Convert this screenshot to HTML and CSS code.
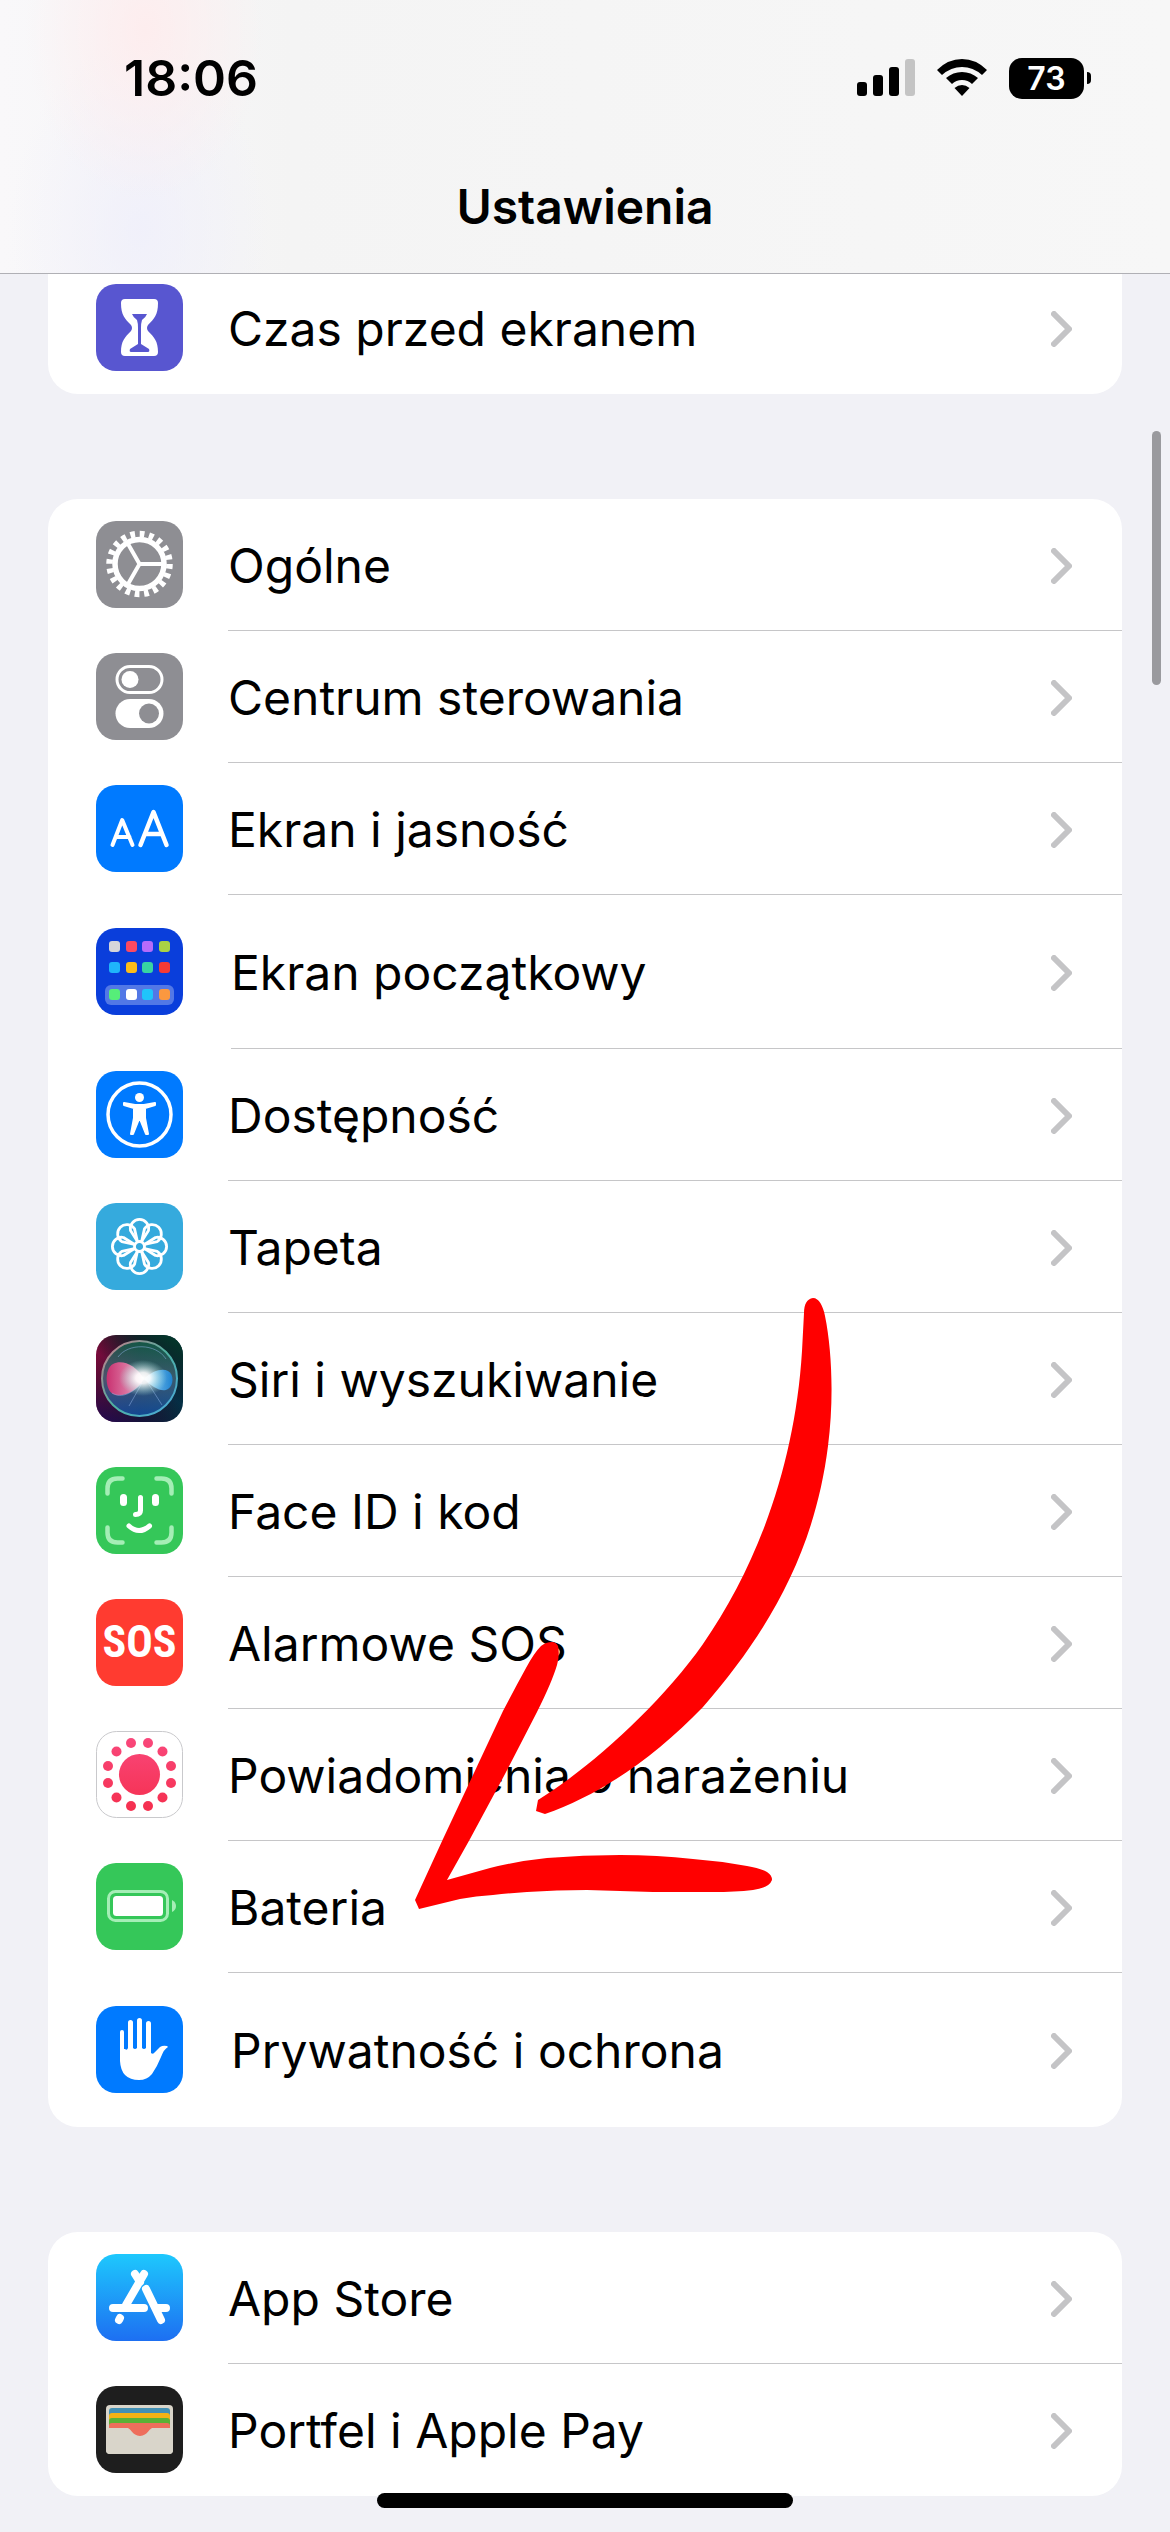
FILE: index.html
```html
<!DOCTYPE html>
<html lang="pl">
<head>
<meta charset="utf-8">
<meta name="viewport" content="width=device-width, initial-scale=1">
<title>Ustawienia</title>
<link rel="stylesheet" href="styles.css">
</head>
<body>
<svg class="defs" aria-hidden="true">
  <defs>
    <symbol id="chevron" viewBox="0 0 21 36"><path d="M3 3l15 15L3 33" fill="none" stroke="#c4c4c6" stroke-width="6" stroke-linecap="round" stroke-linejoin="round"/></symbol>
    <linearGradient id="store" x1="0" y1="0" x2="0" y2="1"><stop offset="0" stop-color="#1ec8fd"/><stop offset="1" stop-color="#1d6ff2"/></linearGradient>
    <linearGradient id="exposure" gradientUnits="userSpaceOnUse" x1="0" y1="6" x2="0" y2="80"><stop offset="0" stop-color="#f9487c"/><stop offset="1" stop-color="#f52f4e"/></linearGradient>
    <linearGradient id="siriLeft" x1="0" y1="0" x2="1" y2="0"><stop offset="0" stop-color="#7d0a3c"/><stop offset="0.5" stop-color="#1f1836"/><stop offset="1" stop-color="#033046"/></linearGradient>
    <linearGradient id="siriShade" x1="0.2" y1="1" x2="0.8" y2="0"><stop offset="0" stop-color="#0a0a50" stop-opacity="0.7"/><stop offset="0.5" stop-color="#111" stop-opacity="0"/><stop offset="1" stop-color="#04352a"/></linearGradient>
    <linearGradient id="siriOrb" x1="0.5" y1="0" x2="0.5" y2="1"><stop offset="0" stop-color="#14684f"/><stop offset="0.5" stop-color="#4a6a80"/><stop offset="1" stop-color="#1058b0"/></linearGradient>
    <linearGradient id="siriRing" x1="0" y1="0" x2="1" y2="1"><stop offset="0" stop-color="#d07888"/><stop offset="0.5" stop-color="#4fb0a0"/><stop offset="1" stop-color="#4aa8e0"/></linearGradient>
    <linearGradient id="siriPink" x1="0" y1="0" x2="1" y2="0"><stop offset="0" stop-color="#d02f70"/><stop offset="1" stop-color="#f4b0cc"/></linearGradient>
    <linearGradient id="siriBlue" x1="0" y1="0" x2="1" y2="0"><stop offset="0" stop-color="#a8e0ff"/><stop offset="1" stop-color="#1b88dc"/></linearGradient>
    <radialGradient id="siriGlow"><stop offset="0" stop-color="#fff"/><stop offset="0.3" stop-color="#fff" stop-opacity="0.9"/><stop offset="1" stop-color="#9fe8e0" stop-opacity="0"/></radialGradient>
  </defs>
</svg>

<header class="header">
  <div class="status">
    <span class="time">18:06</span>
    <div class="indicators">
      <svg class="signal" width="58" height="38" viewBox="0 0 58 38" role="img" aria-label="Zasięg"><rect x="0" y="23" width="10" height="14" rx="3"/><rect x="16" y="16" width="10" height="21" rx="3"/><rect x="32" y="8" width="10" height="29" rx="3"/><rect x="48" y="0" width="10" height="37" rx="3" fill="#c4c4c4"/></svg>
      <svg class="wifi" width="50" height="38" viewBox="0 0 50 38" role="img" aria-label="Wi-Fi"><path d="M0 11Q11 0 25 0T50 11L45 16Q36 8 25 8T5 16Z"/><path d="M9 19Q16 13 25 13T41 19L35 25Q31 21 25 21T15 25Z"/><path d="M17.500 29Q21 26 25 26T32.500 29L25 37Z"/></svg>
      <div class="battery"><span class="charge">73</span><span class="nub"></span></div>
    </div>
  </div>
  <h1 class="title">Ustawienia</h1>
</header>

<main class="content">
  <ul class="group">
    <li><a class="row" href="#czas">
      <svg class="icon" viewBox="0 0 87 87"><rect width="87" height="87" rx="20" fill="#5856d0"/><path fill="#fff" d="M29 15h29q4 0 4 4c0 12-4 16-10 22q-2 3 0 6c6 6 10 10 10 21q0 4-4 4H29q-4 0-4-4c0-11 4-15 10-21q2-3 0-6c-6-6-10-10-10-22q0-4 4-4z"/><path fill="#5856d0" d="M36 30h15q-1 3-5 6-1 3-1 8v16l8 5q1 3-1 3H35q-2 0-1-3l8-5V44q0-5-1-8-4-3-5-6z"/></svg>
      <span class="label">Czas przed ekranem<svg class="chevron"><use href="#chevron"/></svg></span></a></li>
  </ul>

  <ul class="group">
    <li><a class="row" href="#ogolne">
      <svg class="icon" viewBox="0 0 87 87"><rect width="87" height="87" rx="20" fill="#8e8e93"/><g transform="translate(43.500 43)" fill="none" stroke="#fff"><circle r="30" stroke-width="6.500" stroke-dasharray="4.700 4.725"/><circle r="24.500" stroke-width="5.500"/><path stroke-width="4" d="M0 0h24M0 0l-12-21M0 0l-12 21"/></g></svg>
      <span class="label">Ogólne<svg class="chevron"><use href="#chevron"/></svg></span></a></li>
    <li><a class="row" href="#centrum">
      <svg class="icon" viewBox="0 0 87 87"><rect width="87" height="87" rx="20" fill="#8e8e93"/><rect x="21" y="13.500" width="45" height="26" rx="13" fill="none" stroke="#fff" stroke-width="3"/><circle cx="34" cy="26.500" r="8.500" fill="#fff"/><rect x="19.500" y="46" width="48" height="29" rx="14.500" fill="#fff"/><circle cx="53" cy="60.500" r="10" fill="#8e8e93"/></svg>
      <span class="label">Centrum sterowania<svg class="chevron"><use href="#chevron"/></svg></span></a></li>
    <li><a class="row" href="#ekran">
      <svg class="icon" viewBox="0 0 87 87"><rect width="87" height="87" rx="20" fill="#007aff"/><g fill="none" stroke="#fff" stroke-linecap="round" stroke-linejoin="round"><path stroke-width="4" d="M16.500 60l9.700-25 10.300 25M19.500 52h14"/><path stroke-width="4.500" d="M44.500 60l13-33 13 33M49 49h17"/></g></svg>
      <span class="label">Ekran i jasność<svg class="chevron"><use href="#chevron"/></svg></span></a></li>
    <li><a class="row tall" href="#poczatkowy">
      <svg class="icon" viewBox="0 0 87 87"><rect width="87" height="87" rx="20" fill="#0a3edb"/><rect x="9" y="57" width="69" height="20" rx="6" fill="#5278e6"/><g><rect x="13" y="13" width="11" height="11" rx="3" fill="#d5d5da"/><rect x="30" y="13" width="11" height="11" rx="3" fill="#fc4a62"/><rect x="46" y="13" width="11" height="11" rx="3" fill="#b56bfb"/><rect x="63" y="13" width="11" height="11" rx="3" fill="#a9d245"/><rect x="13" y="34" width="11" height="11" rx="3" fill="#1fb5fb"/><rect x="30" y="34" width="11" height="11" rx="3" fill="#fdbd1a"/><rect x="46" y="34" width="11" height="11" rx="3" fill="#37d5a2"/><rect x="63" y="34" width="11" height="11" rx="3" fill="#f53a35"/><rect x="13" y="61" width="11" height="11" rx="3" fill="#56ee79"/><rect x="30" y="61" width="11" height="11" rx="3" fill="#fff"/><rect x="46" y="61" width="11" height="11" rx="3" fill="#1fc5fb"/><rect x="63" y="61" width="11" height="11" rx="3" fill="#fb9840"/></g></svg>
      <span class="label">Ekran początkowy<svg class="chevron"><use href="#chevron"/></svg></span></a></li>
    <li><a class="row" href="#dostepnosc">
      <svg class="icon" viewBox="0 0 87 87"><rect width="87" height="87" rx="20" fill="#007aff"/><circle cx="43.500" cy="43.500" r="31.500" fill="none" stroke="#fff" stroke-width="3.500"/><circle cx="43.500" cy="26.500" r="4.500" fill="#fff"/><path fill="#fff" stroke="#fff" stroke-width="2" stroke-linejoin="round" d="M28 32l11 2h9l11-2v2l-10 3v10l3 16h-2l-6-15h-1l-6 15h-2l3-16V37l-10-3z"/></svg>
      <span class="label">Dostępność<svg class="chevron"><use href="#chevron"/></svg></span></a></li>
    <li><a class="row" href="#tapeta">
      <svg class="icon" viewBox="0 0 87 87"><rect width="87" height="87" rx="20" fill="#35aadd"/><g transform="translate(43.500 43.500)" fill="none" stroke="#fff" stroke-width="2.800" stroke-linejoin="round"><circle r="5"/><path id="petal" d="M-2-5l-7-11a9.200 9.200 0 1 1 18 0l-7 11"/><use href="#petal" transform="rotate(45)"/><use href="#petal" transform="rotate(90)"/><use href="#petal" transform="rotate(135)"/><use href="#petal" transform="rotate(180)"/><use href="#petal" transform="rotate(225)"/><use href="#petal" transform="rotate(270)"/><use href="#petal" transform="rotate(315)"/></g></svg>
      <span class="label">Tapeta<svg class="chevron"><use href="#chevron"/></svg></span></a></li>
    <li><a class="row" href="#siri">
      <svg class="icon" viewBox="0 0 87 87"><rect width="87" height="87" rx="20" fill="url(#siriLeft)"/><rect width="87" height="87" rx="20" fill="url(#siriShade)"/><circle cx="43.500" cy="43.500" r="37.500" fill="url(#siriOrb)" fill-opacity="0.750" stroke="url(#siriRing)" stroke-width="2"/><path d="M48 44C40 30 26 24 17 29s-8 26 0 30 23-1 31-15z" fill="url(#siriPink)" fill-opacity="0.950"/><path d="M48 44c8-8 18-11 24-8s6 14 0 18-16-2-24-10z" fill="url(#siriBlue)" fill-opacity="0.900"/><path d="M16 58c10 6 20 0 30-10M46 48L33 71M52 48l14 22M22 22c10-14 38-14 48 2" fill="none" stroke="#8fb4e8" stroke-opacity="0.500"/><ellipse cx="47" cy="43" rx="24" ry="18" fill="url(#siriGlow)"/></svg>
      <span class="label">Siri i wyszukiwanie<svg class="chevron"><use href="#chevron"/></svg></span></a></li>
    <li><a class="row" href="#faceid">
      <svg class="icon" viewBox="0 0 87 87"><rect width="87" height="87" rx="20" fill="#35c759"/><g fill="none" stroke-linecap="round" stroke-linejoin="round"><path stroke="#a5eeb6" stroke-width="4.500" d="M11.500 26.500v-5q0-10 10-10h5M60.500 11.500h5q10 0 10 10v5M75.500 60.500v5q0 10-10 10h-5M26.500 75.500h-5q-10 0-10-10v-5"/><path stroke="#fff" stroke-width="5" d="M44.500 30.500v13q0 4-5 4M33 59q10 9 20.500 0"/><path stroke="#fff" stroke-width="7" d="M27.500 30.500v5M59.500 30.500v5"/></g></svg>
      <span class="label">Face ID i kod<svg class="chevron"><use href="#chevron"/></svg></span></a></li>
    <li><a class="row" href="#sos">
      <span class="icon sos" aria-hidden="true">SOS</span>
      <span class="label">Alarmowe SOS<svg class="chevron"><use href="#chevron"/></svg></span></a></li>
    <li><a class="row" href="#narazenie">
      <svg class="icon" viewBox="0 0 87 87"><rect x="0.500" y="0.500" width="86" height="86" rx="20" fill="#fff" stroke="#c9c9cc"/><g fill="url(#exposure)"><circle cx="43.500" cy="43.500" r="20.500"/><circle cx="35" cy="12" r="5"/><circle cx="52" cy="12" r="5"/><circle cx="20.500" cy="20.500" r="5"/><circle cx="66.500" cy="20.500" r="5"/><circle cx="12" cy="35" r="5"/><circle cx="75" cy="35" r="5"/><circle cx="12" cy="52" r="5"/><circle cx="75" cy="52" r="5"/><circle cx="20.500" cy="66.500" r="5"/><circle cx="66.500" cy="66.500" r="5"/><circle cx="35" cy="75" r="5"/><circle cx="52" cy="75" r="5"/></g></svg>
      <span class="label">Powiadomienia o narażeniu<svg class="chevron"><use href="#chevron"/></svg></span></a></li>
    <li><a class="row" href="#bateria">
      <svg class="icon" viewBox="0 0 87 87"><rect width="87" height="87" rx="20" fill="#35c759"/><rect x="12.500" y="28.500" width="59" height="29" rx="7" fill="none" stroke="#a5eeb6" stroke-width="3"/><rect x="17" y="33" width="50" height="20" rx="3.500" fill="#fff"/><path d="M76 37q4 2 4 6t-4 6z" fill="#a5eeb6"/></svg>
      <span class="label">Bateria<svg class="chevron"><use href="#chevron"/></svg></span></a></li>
    <li><a class="row tall" href="#prywatnosc">
      <svg class="icon" viewBox="0 0 87 87"><rect width="87" height="87" rx="20" fill="#007aff"/><g fill="none" stroke="#fff" stroke-linecap="round"><path stroke-width="4" d="M26 26v24"/><path stroke-width="5" d="M34.500 16.500V45M43.500 14.500V45M52.500 17.500V45"/></g><path fill="#fff" d="M24 43h5q2 2 3-1h5q2 2 4 0h5q2 2 4 0h5v5q2 2 4-1l5-5q3-2 7-1l1 1q-4 2-7 10-4 10-9 17-5 6-13 6-18 0-19-19z"/></svg>
      <span class="label">Prywatność i ochrona<svg class="chevron"><use href="#chevron"/></svg></span></a></li>
    <li class="pointer" aria-hidden="true">
      <svg width="422" height="617" viewBox="413 1295 422 617" fill="#f00"><path d="M813 1298C819 1298 823 1306 825 1316 832 1350 834 1400 828 1446 815 1550 770 1630 703 1707 655 1757 600 1795 545 1814L536 1811 538 1800C590 1768 660 1705 703 1644 757 1566 795 1465 802 1351L804 1313C804 1304 807 1299 813 1298Z"/><path d="M558 1646Q556 1642 552 1642 546 1642 541 1646 534 1653 526 1668 515 1688 503 1711L443 1839 415 1900 419 1909 460 1899Q476 1896 493 1895 510 1893 527 1892 557 1890 587 1890L653 1892H713Q735 1892 753 1890 769 1888 772 1880 772 1875 767 1872 760 1868 747 1866 720 1861 693 1859 657 1855 620 1855 583 1855 547 1858 518 1861 490 1868L447 1880 470 1839 505 1774 537 1712Q552 1682 557 1665 560 1654 558 1646Z"/></svg>
    </li>
  </ul>

  <ul class="group">
    <li><a class="row" href="#appstore">
      <svg class="icon" viewBox="0 0 87 87"><rect width="87" height="87" rx="20" fill="url(#store)"/><g stroke="#fff" stroke-width="8" stroke-linecap="round" fill="none"><path d="M17 54h31M62 54h8M39 20l5 8M48 20L30 51M50 35l15 31M24 64l-1 2"/></g></svg>
      <span class="label">App Store<svg class="chevron"><use href="#chevron"/></svg></span></a></li>
    <li><a class="row" href="#portfel">
      <svg class="icon" viewBox="0 0 87 87"><rect width="87" height="87" rx="20" fill="#1e1e1e"/><rect x="10" y="19" width="67" height="49" rx="4" fill="#d9d5ca"/><path d="M13 42V25q0-3 3-3h55q3 0 3 3v17z" fill="#4390b4"/><path d="M13 42V30q0-3 3-3h55q3 0 3 3v12z" fill="#f3b214"/><path d="M13 42v-7q0-3 3-3h55q3 0 3 3v7z" fill="#5bb136"/><path d="M13 42v-2q0-3 3-3h55q3 0 3 3v2z" fill="#ee6e5c"/><path d="M10 42h21c5 0 6 8 13 8s8-8 13-8h20v22q0 4-4 4H14q-4 0-4-4z" fill="#d9d5ca"/><path d="M29 41c6 0 7 9 15 9s9-9 15-9z" fill="#ee6e5c"/></svg>
      <span class="label">Portfel i Apple Pay<svg class="chevron"><use href="#chevron"/></svg></span></a></li>
  </ul>
</main>
<div class="scrollbar" aria-hidden="true"></div>
<div class="home" aria-hidden="true"></div>
</body>
</html>
```
FILE: styles.css
```css
* {
  box-sizing: border-box;
}

body {
  margin: 0;
  background: #f1f1f6;
  color: #000;
  font-family: Inter, "Liberation Sans", sans-serif;
  font-size: 48px;
}

.defs {
  position: absolute;
  width: 0;
  height: 0;
}

/* Navigation bar */
.header {
  position: sticky;
  top: 0;
  z-index: 2;
  padding-bottom: 16px;
  border-bottom: 1px solid #b0b0b5;
  background:
    radial-gradient(ellipse 120px 170px at 145px 30px, #ffebecd0, #ffebec00),
    radial-gradient(ellipse 130px 190px at 140px 230px, #efeffbd0, #efeffb00),
    linear-gradient(90deg, #f9f8fa, #f4f4f4 25%, #f7f7f7);
}

.status {
  display: flex;
  align-items: center;
  justify-content: space-between;
  height: 156px;
  padding: 0 79px 0 124px;
}

.time {
  font-size: 50px;
  font-weight: 600;
}

.indicators {
  display: flex;
  align-items: center;
  gap: 22px;
}

.battery {
  display: flex;
  align-items: center;
  gap: 3px;
}

.charge {
  width: 75px;
  border-radius: 13px;
  background: #000;
  color: #fff;
  font-size: 32px;
  font-weight: 600;
  line-height: 41px;
  text-align: center;
}

.nub {
  width: 4px;
  height: 12px;
  border-radius: 0 4px 4px 0;
  background: #000;
}

.title {
  margin: 0;
  font-size: 48px;
  font-weight: 600;
  line-height: 101px;
  text-align: center;
}

/* Settings list */
.content {
  display: flex;
  flex-direction: column;
  gap: 105px;
  margin-top: -12px;
  padding: 0 48px 36px;
}

.group {
  position: relative;
  margin: 0;
  padding: 0;
  border-radius: 30px;
  background: #fff;
  list-style: none;
}

.group:first-child {
  border-radius: 0 0 30px 30px;
}

.row {
  display: flex;
  align-items: center;
  gap: 45px;
  height: 132px;
  padding-left: 48px;
  color: inherit;
  text-decoration: none;
}

.tall {
  gap: 48px;
  height: 154px;
}

.icon {
  flex: none;
  width: 87px;
  height: 87px;
  margin-bottom: 1px;
}

.sos {
  border-radius: 20px;
  background: #ff3b30;
  color: #fff;
  font-family: "Roboto Condensed", "Liberation Sans Narrow", Roboto, sans-serif;
  font-size: 44px;
  font-weight: 700;
  line-height: 87px;
  text-align: center;
}

.label {
  display: flex;
  flex: 1;
  align-items: center;
  justify-content: space-between;
  align-self: stretch;
  padding: 2px 50px 0 0;
  border-bottom: 1px solid #c6c6c8;
  white-space: nowrap;
}

.group > li:nth-last-child(1 of :not(.pointer)) .label {
  border-bottom-color: transparent;
}

.chevron {
  flex: none;
  width: 21px;
  height: 36px;
}

/* Hand-drawn arrow over the list */
.pointer {
  position: absolute;
  top: 796px;
  left: 365px;
  pointer-events: none;
}

.scrollbar {
  position: fixed;
  top: 431px;
  right: 9px;
  width: 9px;
  height: 254px;
  border-radius: 5px;
  background: #9a9a9e;
}

.home {
  position: fixed;
  bottom: 24px;
  left: 50%;
  width: 416px;
  height: 15px;
  margin-left: -208px;
  border-radius: 8px;
  background: #000;
}
```
